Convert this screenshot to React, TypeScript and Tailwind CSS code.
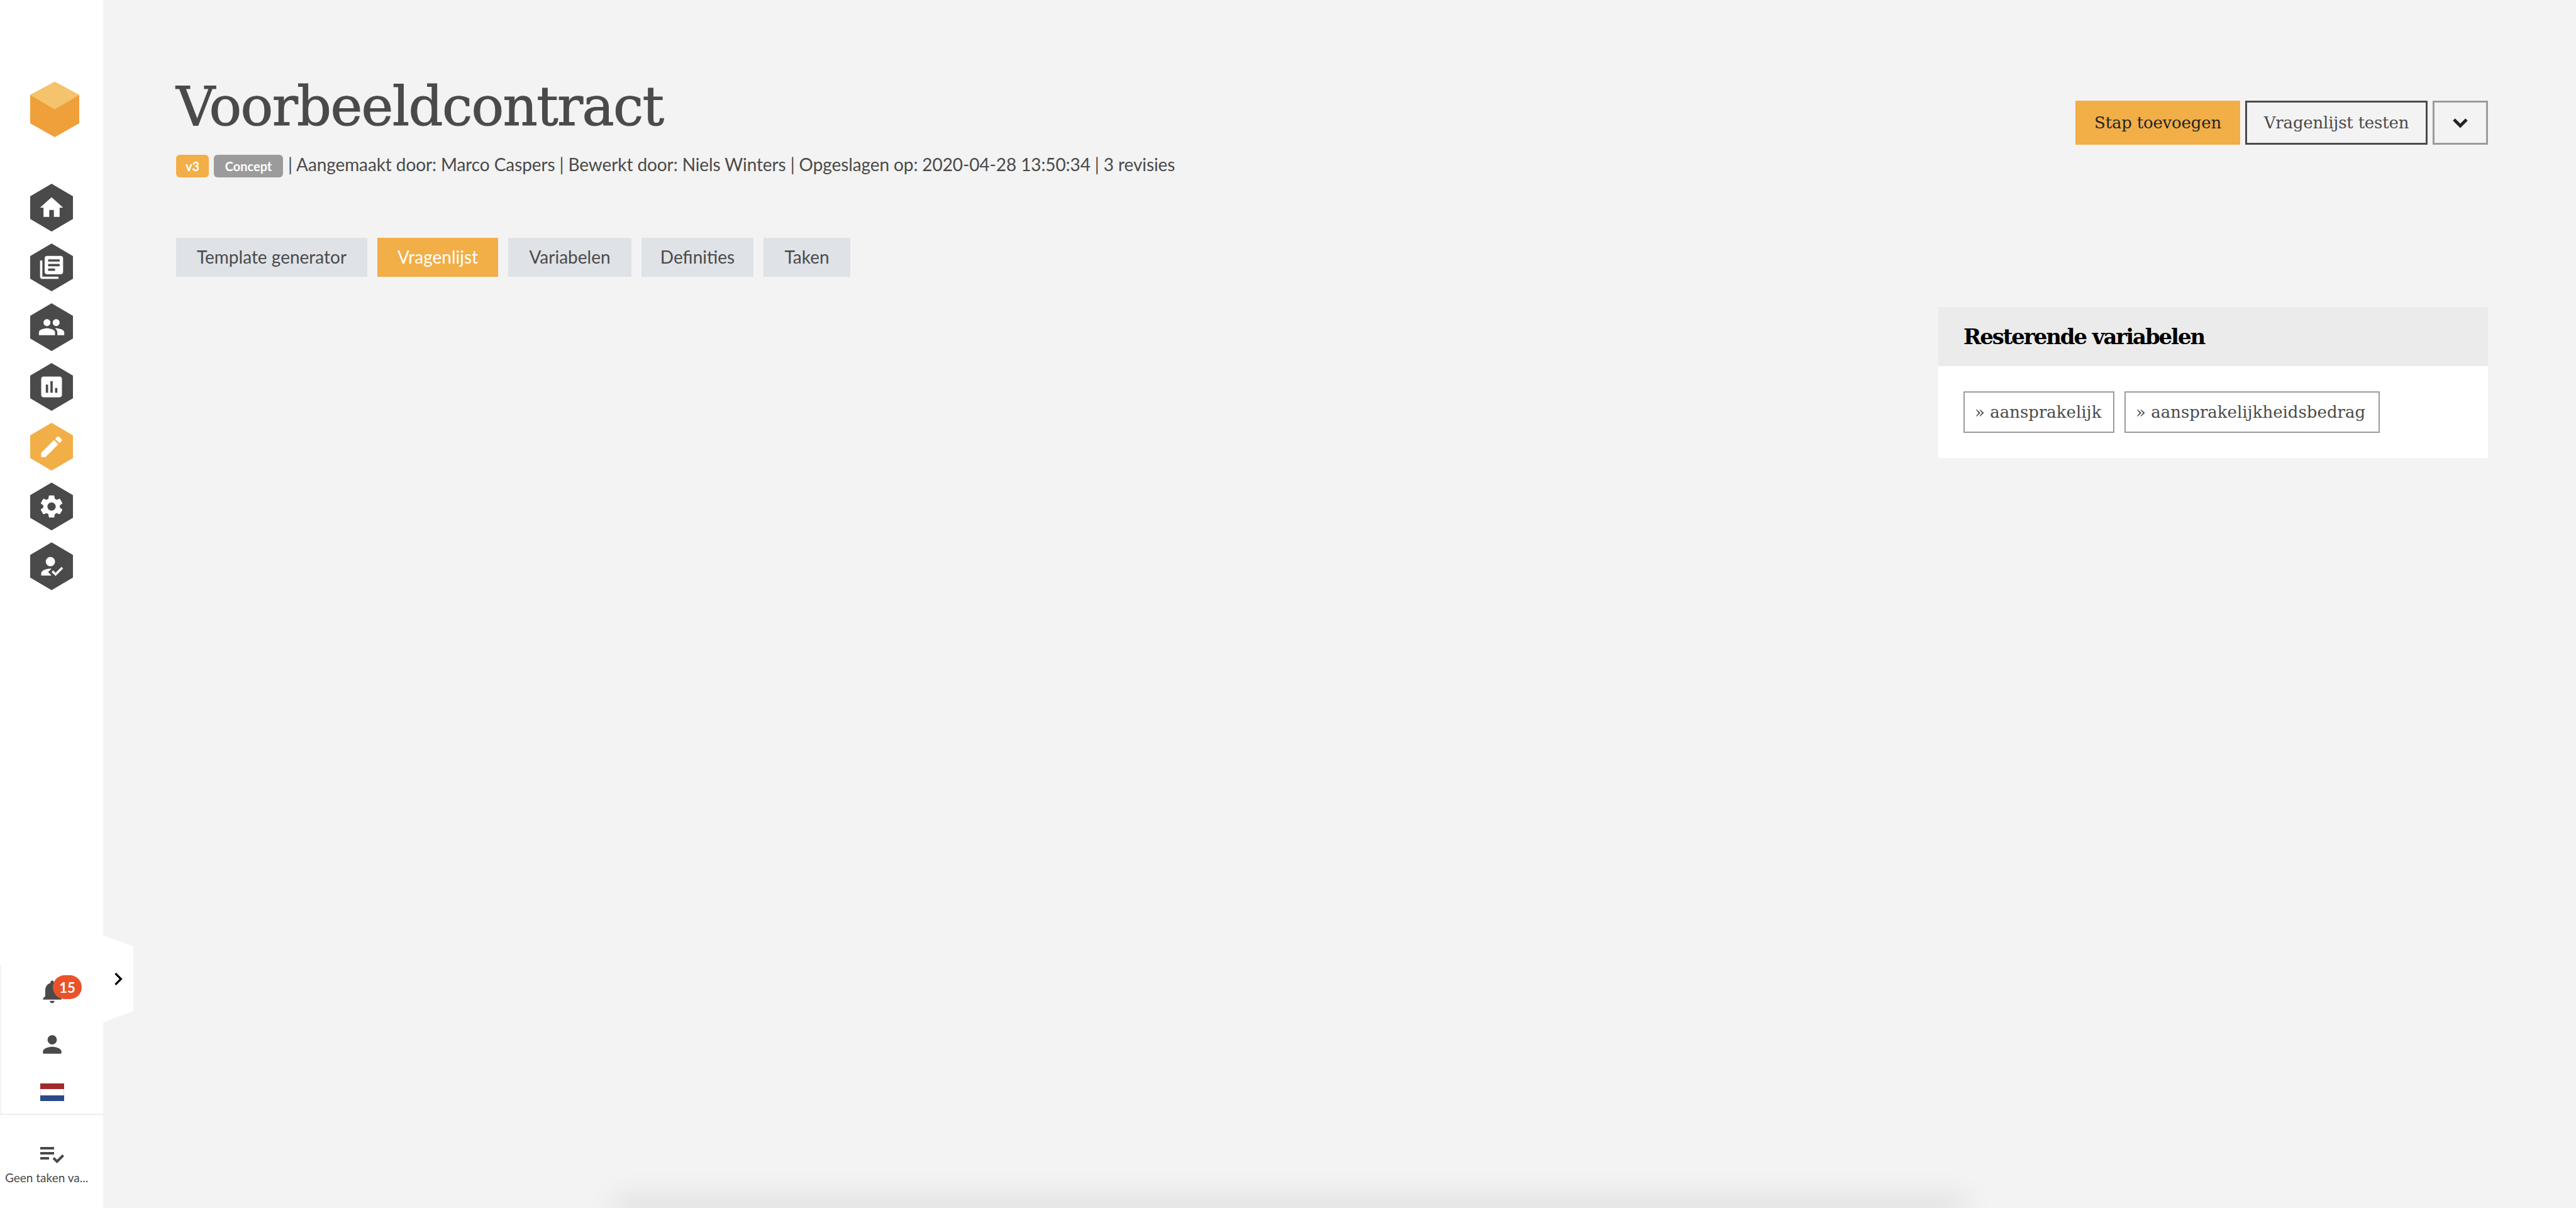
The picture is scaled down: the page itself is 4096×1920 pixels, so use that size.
import React from "react";
import {
  MdHome,
  MdLibraryBooks,
  MdPeople,
  MdAssessment,
  MdEdit,
  MdSettings,
  MdHowToReg,
  MdNotifications,
  MdPerson,
  MdPlaylistAddCheck,
  MdKeyboardArrowRight,
} from "react-icons/md";
import type { IconType } from "react-icons";

const navItems: { icon: IconType; active?: boolean }[] = [
  { icon: MdHome },
  { icon: MdLibraryBooks },
  { icon: MdPeople },
  { icon: MdAssessment },
  { icon: MdEdit, active: true },
  { icon: MdSettings },
  { icon: MdHowToReg },
];

const tabs = [
  { label: "Template generator", width: "w-[304px]" },
  { label: "Vragenlijst", width: "w-[192px]" },
  { label: "Variabelen", width: "w-[196px]" },
  { label: "Definities", width: "w-[178px]" },
  { label: "Taken", width: "w-[138px]" },
];

const HexButton = ({ icon: Icon, active }: { icon: IconType; active?: boolean }) => (
  <div className="grid w-[68px] h-[76px] place-items-center">
    <svg viewBox="0 0 68 76" className="col-start-1 row-start-1 w-[68px] h-[76px]">
      <polygon points="34,0 68,20 68,56 34,76 0,56 0,20" fill={active ? "#f2ae47" : "#4a4a4a"} />
    </svg>
    <Icon className="col-start-1 row-start-1 z-10 text-white" size={44} />
  </div>
);

const Sidebar = () => (
  <aside className="relative flex flex-col w-[164px] h-full shrink-0 bg-white">
    <svg viewBox="0 0 78 88" className="ml-12 mt-[130px] w-[78px] h-[88px] shrink-0">
      <polygon points="39,0 78,21 78,66 39,88 0,66 0,21" fill="#efa03a" />
      <polygon points="39,0 78,21 39,44 0,21" fill="#f4c36c" />
    </svg>
    <nav className="flex flex-col gap-[19px] ml-12 mt-[74px]">
      {navItems.map((item, i) => (
        <HexButton key={i} icon={item.icon} active={item.active} />
      ))}
    </nav>
    <div className="flex-1" />
    <div className="relative flex flex-col items-center h-[236px] pt-5 border-l-2 border-[#f3f3f3]">
      <div className="relative w-11 h-11 text-[#4a4a4a]">
        <MdNotifications size={44} />
        <span className="absolute left-[23px] top-[-4px] flex items-center justify-center w-[46px] h-[38px] rounded-full bg-[#ea5329] text-white text-[22px] font-bold font-['Lato',sans-serif]">
          15
        </span>
      </div>
      <MdPerson size={44} className="mt-10 text-[#4a4a4a]" />
      <div className="flex flex-col mt-10 w-[38px] h-7">
        <div className="flex-1 bg-[#a02a2c]" />
        <div className="flex-1 bg-white border-x border-[#d5d9e6]" />
        <div className="flex-1 bg-[#2a4a88]" />
      </div>
    </div>
    <div className="h-[2px] bg-[#ececec]" />
    <div className="flex flex-col h-[148px] pt-[39px] text-[#4a4a4a]">
      <MdPlaylistAddCheck size={48} className="ml-[58px]" />
      <span className="mt-[1px] pl-2 text-[19px] leading-6 whitespace-nowrap font-['Lato',sans-serif]">Geen taken va...</span>
    </div>
    <div className="absolute left-full top-[1487px] flex items-center w-12 h-[138px]">
      <svg viewBox="0 0 48 138" className="w-12 h-[138px]">
        <polygon points="0,0 48,17 48,120 0,138" fill="#ffffff" />
      </svg>
      <MdKeyboardArrowRight size={40} className="absolute left-1 top-[49px] text-black" />
    </div>
  </aside>
);

export default function App() {
  return (
    <div className="flex w-[4096px] h-[1920px] overflow-hidden bg-[#f3f3f3] text-[#4a4a4a] font-['Lato',sans-serif]">
      <Sidebar />
      <main className="flex flex-col flex-1 pl-[116px] pr-[140px]">
        <header className="flex items-start justify-between">
          <div>
            <h1 className="mt-[114px] text-[86px] leading-[110px] tracking-[-1.7px] [-webkit-text-stroke:1px_#4a4a4a] font-['DejaVu_Serif',serif]">Voorbeeldcontract</h1>
            <div className="flex items-center mt-[22px] h-9 text-[28px]">
              <span className="flex items-center justify-center w-[52px] h-9 rounded-md bg-[#f2ae47] text-white text-[20px] font-bold">v3</span>
              <span className="flex items-center justify-center ml-2 w-[110px] h-9 rounded-md bg-[#9b9b9b] text-white text-[20px] font-bold">Concept</span>
              <span className="ml-2 pb-[6px] whitespace-nowrap tracking-[-0.1px]">| Aangemaakt door: Marco Caspers | Bewerkt door: Niels Winters | Opgeslagen op: 2020-04-28 13:50:34 | 3 revisies</span>
            </div>
          </div>
          <div className="flex gap-2 mt-40 font-['DejaVu_Serif',serif] text-[26px] tracking-[-0.2px]">
            <button className="w-[262px] h-[70px] bg-[#f2ae47] text-[#212529]">Stap toevoegen</button>
            <button className="w-[290px] h-[70px] border-[3px] border-[#4a4a4a]">Vragenlijst testen</button>
            <button className="flex items-center justify-center w-[88px] h-[70px] border-[3px] border-[#9b9b9b]">
              <svg viewBox="0 0 26 17" className="w-[26px] h-[17px]">
                <polyline points="3,3 13,13 23,3" fill="none" stroke="#212529" strokeWidth="5" />
              </svg>
            </button>
          </div>
        </header>
        <div className="flex gap-4 mt-[96px]">
          {tabs.map((tab) => (
            <div
              key={tab.label}
              className={`flex items-center justify-center h-[62px] pb-[3px] text-[28px] ${tab.width} ${tab.label === "Vragenlijst" ? "bg-[#f2ae47] text-white" : "bg-[#dfe2e7]"}`}
            >
              {tab.label}
            </div>
          ))}
        </div>
        <section className="self-end mt-12 w-[874px] bg-white">
          <div className="flex items-center h-[94px] px-10 bg-[#ebebeb] text-black text-[34px] font-bold tracking-[-2.1px] font-['DejaVu_Serif',serif]">
            Resterende variabelen
          </div>
          <div className="flex gap-4 h-[146px] px-10 pt-10 font-['DejaVu_Serif',serif] text-[26px]">
            <div className="flex items-center pl-4 w-[240px] h-[66px] border-2 border-[#9b9b9b] whitespace-nowrap">» aansprakelijk</div>
            <div className="flex items-center pl-4 w-[406px] h-[66px] border-2 border-[#9b9b9b] whitespace-nowrap">» aansprakelijkheidsbedrag</div>
          </div>
        </section>
        <div className="flex-1" />
        <div className="ml-[706px] w-[2130px] h-0 shadow-[0_0_50px_8px_rgba(0,0,0,0.2)]" />
      </main>
    </div>
  );
}
